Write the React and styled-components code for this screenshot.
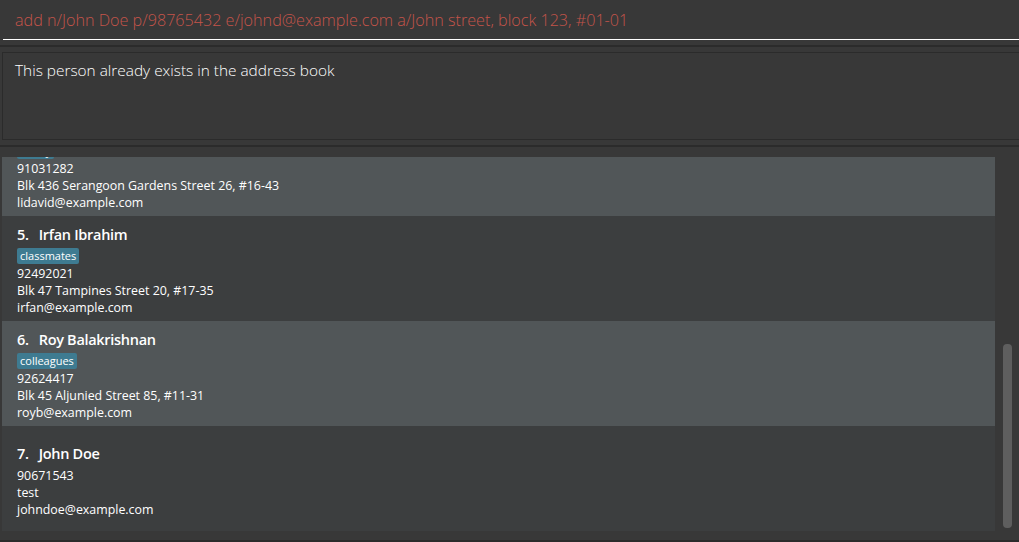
import React from "react"
import styled, { createGlobalStyle } from "styled-components"

const GlobalStyle = createGlobalStyle`
  html, body {
    margin: 0;
    padding: 0;
    background: #383838;
    overflow: hidden;
  }
  * {
    box-sizing: border-box;
  }
`

const persons = [
  {
    index: 4,
    name: "David Li",
    tags: ["family"],
    phone: "91031282",
    address: "Blk 436 Serangoon Gardens Street 26, #16-43",
    email: "lidavid@example.com",
  },
  {
    index: 5,
    name: "Irfan Ibrahim",
    tags: ["classmates"],
    phone: "92492021",
    address: "Blk 47 Tampines Street 20, #17-35",
    email: "irfan@example.com",
  },
  {
    index: 6,
    name: "Roy Balakrishnan",
    tags: ["colleagues"],
    phone: "92624417",
    address: "Blk 45 Aljunied Street 85, #11-31",
    email: "royb@example.com",
  },
  {
    index: 7,
    name: "John Doe",
    tags: [],
    phone: "90671543",
    address: "test",
    email: "johndoe@example.com",
  },
]

export default function App() {
  return (
    <Window>
      <GlobalStyle />
      <CommandBox>
        <CommandText>add n/John Doe p/98765432 e/johnd@example.com a/John street, block 123, #01-01</CommandText>
      </CommandBox>
      <Divider />
      <ResultBox>
        <ResultText>This person already exists in the address book</ResultText>
      </ResultBox>
      <Divider />
      <ListArea>
        <List>
          {persons.map((p) => (
            <Card key={p.index} $odd={p.index % 2 === 0}>
              <Name>
                <span>{p.index}.</span>
                {p.name}
              </Name>
              {p.tags.length > 0 && (
                <Tags>
                  {p.tags.map((t) => (
                    <Tag key={t}>{t}</Tag>
                  ))}
                </Tags>
              )}
              <Field>{p.phone}</Field>
              <Field>{p.address}</Field>
              <Field>{p.email}</Field>
            </Card>
          ))}
        </List>
        <ScrollTrack>
          <Thumb />
        </ScrollTrack>
      </ListArea>
      <BottomLine />
    </Window>
  )
}

const Window = styled.div`
  width: 1019px;
  height: 542px;
  display: flex;
  flex-direction: column;
  background: #383838;
  font-family: "Open Sans", "Noto Sans", sans-serif;
`

const CommandBox = styled.div`
  height: 40px;
  margin-left: 3px;
  padding: 9px 0 0 12px;
  border-bottom: 1px solid #ffffff;
`

const CommandText = styled.div`
  color: #c4544a;
  font-size: 16.15px;
  font-weight: 300;
  white-space: nowrap;
`

const Divider = styled.div`
  height: 2px;
  margin: 5px 0;
  background: #2b2b2b;
`

const ResultBox = styled.div`
  height: 88px;
  margin-left: 2px;
  border: 1px solid #2b2b2b;
  border-right: none;
  padding: 7px 12px;
`

const ResultText = styled.div`
  color: #ffffff;
  font-size: 15.4px;
  font-weight: 300;
`

const ListArea = styled.div`
  height: 379px;
  display: flex;
  padding: 5px 0 0 2px;
`

const List = styled.div`
  flex: 1;
  display: flex;
  flex-direction: column;
  justify-content: flex-end;
  overflow: hidden;
`

const Card = styled.div`
  flex: 0 0 105px;
  display: flex;
  flex-direction: column;
  justify-content: center;
  padding: 3px 15px 0;
  background: ${(p) => (p.$odd ? "#515658" : "#3c3e3f")};
  color: #ffffff;
`

const Name = styled.div`
  font-size: 14.5px;
  font-weight: 600;
  letter-spacing: -0.3px;
  line-height: 21px;
  margin-bottom: 3px;

  span {
    margin-right: 10px;
  }
`

const Tags = styled.div`
  display: flex;
  gap: 4px;
  margin-bottom: 1px;
`

const Tag = styled.span`
  background: #3e7b91;
  color: #ffffff;
  font-size: 11px;
  line-height: 16px;
  padding: 0 3px;
  border-radius: 2px;
`

const Field = styled.div`
  font-size: 12.4px;
  line-height: 17px;
`

const ScrollTrack = styled.div`
  width: 24px;
  display: flex;
  justify-content: center;
  align-items: flex-end;
  padding: 0 0 3px 0;
`

const Thumb = styled.div`
  width: 9px;
  height: 184px;
  border-radius: 4px;
  background: #5e5e5e;
`

const BottomLine = styled.div`
  height: 2px;
  margin-top: 9px;
  background: #2b2b2b;
`
